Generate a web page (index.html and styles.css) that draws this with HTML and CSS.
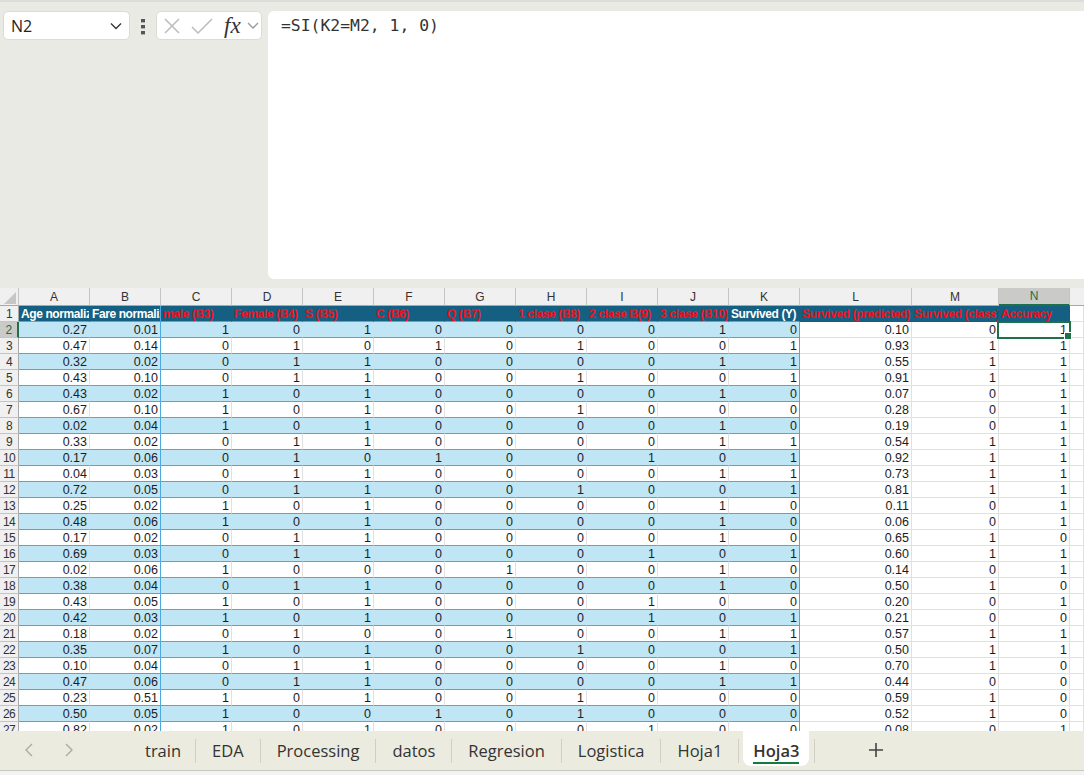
FILE: index.html
```html
<!DOCTYPE html>
<html lang="es">
<head>
<meta charset="UTF-8">
<meta name="viewport" content="width=device-width, initial-scale=1.0">
<title>Hoja3</title>
<link rel="stylesheet" href="styles.css">
</head>
<body>

<div class="formula-area">
  <div class="name-box">
    <span>N2</span>
    <svg class="chev" width="12" height="8" viewBox="0 0 12 8"><path d="M1 1.5 L6 6.5 L11 1.5"/></svg>
  </div>
  <svg class="dots" width="4" height="16" viewBox="0 0 4 16"><rect width="4" height="3.4" y="0"/><rect width="4" height="3.4" y="6"/><rect width="4" height="3.4" y="12"/></svg>
  <div class="fx-box">
    <svg class="fx-icon" width="16" height="16" viewBox="0 0 16 16"><path d="M1 1 L15 15 M15 1 L1 15"/></svg>
    <svg class="fx-icon" width="22" height="16" viewBox="0 0 22 16"><path d="M1 9 L7 15 L21 1"/></svg>
    <span class="fx">fx</span>
    <svg class="chev light" width="12" height="7" viewBox="0 0 12 7"><path d="M1 1 L6 6 L11 1"/></svg>
  </div>
  <div class="formula-input">=SI(K2=M2, 1, 0)</div>
</div>

<div class="sheet">
  <table>
    <thead>
      <tr class="letters">
        <th class="corner"><svg width="12" height="12" viewBox="0 0 12 12"><path d="M12 0 V12 H0 Z"/></svg></th>
        <th>A</th><th>B</th><th>C</th><th>D</th><th>E</th><th>F</th><th>G</th><th>H</th><th>I</th><th>J</th><th>K</th><th class="w-l">L</th><th class="w-m">M</th><th class="sel-col">N</th><th class="w-o"></th>
      </tr>
    </thead>
    <tbody>
      <tr class="titles"><th>1</th><td class="w">Age normalized</td><td class="w">Fare normalized</td><td>male (B3)</td><td>Female (B4)</td><td>S (B5)</td><td>C (B6)</td><td>Q (B7)</td><td>1 clase (B8)</td><td>2 clase B(9)</td><td>3 clase (B10)</td><td class="w">Survived (Y)</td><td>Survived (predicted)</td><td>Survived (class)</td><td>Accuracy</td><td></td></tr>
      <tr><th class="sel-row">2</th><td>0.27</td><td>0.01</td><td>1</td><td>0</td><td>1</td><td>0</td><td>0</td><td>0</td><td>0</td><td>1</td><td>0</td><td>0.10</td><td>0</td><td class="active-cell">1<span class="cursor"></span></td><td></td></tr>
      <tr><th>3</th><td>0.47</td><td>0.14</td><td>0</td><td>1</td><td>0</td><td>1</td><td>0</td><td>1</td><td>0</td><td>0</td><td>1</td><td>0.93</td><td>1</td><td>1</td><td></td></tr>
      <tr><th>4</th><td>0.32</td><td>0.02</td><td>0</td><td>1</td><td>1</td><td>0</td><td>0</td><td>0</td><td>0</td><td>1</td><td>1</td><td>0.55</td><td>1</td><td>1</td><td></td></tr>
      <tr><th>5</th><td>0.43</td><td>0.10</td><td>0</td><td>1</td><td>1</td><td>0</td><td>0</td><td>1</td><td>0</td><td>0</td><td>1</td><td>0.91</td><td>1</td><td>1</td><td></td></tr>
      <tr><th>6</th><td>0.43</td><td>0.02</td><td>1</td><td>0</td><td>1</td><td>0</td><td>0</td><td>0</td><td>0</td><td>1</td><td>0</td><td>0.07</td><td>0</td><td>1</td><td></td></tr>
      <tr><th>7</th><td>0.67</td><td>0.10</td><td>1</td><td>0</td><td>1</td><td>0</td><td>0</td><td>1</td><td>0</td><td>0</td><td>0</td><td>0.28</td><td>0</td><td>1</td><td></td></tr>
      <tr><th>8</th><td>0.02</td><td>0.04</td><td>1</td><td>0</td><td>1</td><td>0</td><td>0</td><td>0</td><td>0</td><td>1</td><td>0</td><td>0.19</td><td>0</td><td>1</td><td></td></tr>
      <tr><th>9</th><td>0.33</td><td>0.02</td><td>0</td><td>1</td><td>1</td><td>0</td><td>0</td><td>0</td><td>0</td><td>1</td><td>1</td><td>0.54</td><td>1</td><td>1</td><td></td></tr>
      <tr><th>10</th><td>0.17</td><td>0.06</td><td>0</td><td>1</td><td>0</td><td>1</td><td>0</td><td>0</td><td>1</td><td>0</td><td>1</td><td>0.92</td><td>1</td><td>1</td><td></td></tr>
      <tr><th>11</th><td>0.04</td><td>0.03</td><td>0</td><td>1</td><td>1</td><td>0</td><td>0</td><td>0</td><td>0</td><td>1</td><td>1</td><td>0.73</td><td>1</td><td>1</td><td></td></tr>
      <tr><th>12</th><td>0.72</td><td>0.05</td><td>0</td><td>1</td><td>1</td><td>0</td><td>0</td><td>1</td><td>0</td><td>0</td><td>1</td><td>0.81</td><td>1</td><td>1</td><td></td></tr>
      <tr><th>13</th><td>0.25</td><td>0.02</td><td>1</td><td>0</td><td>1</td><td>0</td><td>0</td><td>0</td><td>0</td><td>1</td><td>0</td><td>0.11</td><td>0</td><td>1</td><td></td></tr>
      <tr><th>14</th><td>0.48</td><td>0.06</td><td>1</td><td>0</td><td>1</td><td>0</td><td>0</td><td>0</td><td>0</td><td>1</td><td>0</td><td>0.06</td><td>0</td><td>1</td><td></td></tr>
      <tr><th>15</th><td>0.17</td><td>0.02</td><td>0</td><td>1</td><td>1</td><td>0</td><td>0</td><td>0</td><td>0</td><td>1</td><td>0</td><td>0.65</td><td>1</td><td>0</td><td></td></tr>
      <tr><th>16</th><td>0.69</td><td>0.03</td><td>0</td><td>1</td><td>1</td><td>0</td><td>0</td><td>0</td><td>1</td><td>0</td><td>1</td><td>0.60</td><td>1</td><td>1</td><td></td></tr>
      <tr><th>17</th><td>0.02</td><td>0.06</td><td>1</td><td>0</td><td>0</td><td>0</td><td>1</td><td>0</td><td>0</td><td>1</td><td>0</td><td>0.14</td><td>0</td><td>1</td><td></td></tr>
      <tr><th>18</th><td>0.38</td><td>0.04</td><td>0</td><td>1</td><td>1</td><td>0</td><td>0</td><td>0</td><td>0</td><td>1</td><td>0</td><td>0.50</td><td>1</td><td>0</td><td></td></tr>
      <tr><th>19</th><td>0.43</td><td>0.05</td><td>1</td><td>0</td><td>1</td><td>0</td><td>0</td><td>0</td><td>1</td><td>0</td><td>0</td><td>0.20</td><td>0</td><td>1</td><td></td></tr>
      <tr><th>20</th><td>0.42</td><td>0.03</td><td>1</td><td>0</td><td>1</td><td>0</td><td>0</td><td>0</td><td>1</td><td>0</td><td>1</td><td>0.21</td><td>0</td><td>0</td><td></td></tr>
      <tr><th>21</th><td>0.18</td><td>0.02</td><td>0</td><td>1</td><td>0</td><td>0</td><td>1</td><td>0</td><td>0</td><td>1</td><td>1</td><td>0.57</td><td>1</td><td>1</td><td></td></tr>
      <tr><th>22</th><td>0.35</td><td>0.07</td><td>1</td><td>0</td><td>1</td><td>0</td><td>0</td><td>1</td><td>0</td><td>0</td><td>1</td><td>0.50</td><td>1</td><td>1</td><td></td></tr>
      <tr><th>23</th><td>0.10</td><td>0.04</td><td>0</td><td>1</td><td>1</td><td>0</td><td>0</td><td>0</td><td>0</td><td>1</td><td>0</td><td>0.70</td><td>1</td><td>0</td><td></td></tr>
      <tr><th>24</th><td>0.47</td><td>0.06</td><td>0</td><td>1</td><td>1</td><td>0</td><td>0</td><td>0</td><td>0</td><td>1</td><td>1</td><td>0.44</td><td>0</td><td>0</td><td></td></tr>
      <tr><th>25</th><td>0.23</td><td>0.51</td><td>1</td><td>0</td><td>1</td><td>0</td><td>0</td><td>1</td><td>0</td><td>0</td><td>0</td><td>0.59</td><td>1</td><td>0</td><td></td></tr>
      <tr><th>26</th><td>0.50</td><td>0.05</td><td>1</td><td>0</td><td>0</td><td>1</td><td>0</td><td>1</td><td>0</td><td>0</td><td>0</td><td>0.52</td><td>1</td><td>0</td><td></td></tr>
      <tr><th>27</th><td>0.82</td><td>0.02</td><td>1</td><td>0</td><td>1</td><td>0</td><td>0</td><td>0</td><td>1</td><td>0</td><td>0</td><td>0.08</td><td>0</td><td>1</td><td></td></tr>
    </tbody>
  </table>
</div>

<div class="tabbar">
  <div class="nav">
    <svg width="10" height="16" viewBox="0 0 10 16"><path d="M8 2 L2 8 L8 14"/></svg>
    <svg width="10" height="16" viewBox="0 0 10 16"><path d="M2 2 L8 8 L2 14"/></svg>
  </div>
  <div class="tab">train</div>
  <div class="tab">EDA</div>
  <div class="tab">Processing</div>
  <div class="tab">datos</div>
  <div class="tab">Regresion</div>
  <div class="tab">Logistica</div>
  <div class="tab">Hoja1</div>
  <div class="tab active"><span>Hoja3</span></div>
  <div class="tab-end"></div>
  <svg class="plus" width="16" height="16" viewBox="0 0 16 16"><path d="M8 1 V15 M1 8 H15"/></svg>
</div>
<div class="statusbar"></div>

</body>
</html>
```

FILE: styles.css
```css
* {
  box-sizing: border-box;
}
body {
  margin: 0;
  width: 1084px;
  height: 775px;
  overflow: hidden;
  background: #e9eae3;
  font-family: "Liberation Sans", Arial, sans-serif;
  color: #222;
}

/* formula bar */
.formula-area {
  height: 288px;
  display: flex;
  align-items: flex-start;
  padding: 9px 0 0 3px;
  border-top: 2px solid #dcdcd8;
}
.name-box {
  width: 127px;
  height: 29px;
  display: flex;
  align-items: center;
  justify-content: space-between;
  padding: 0 7px 0 7px;
  background: #fff;
  border: 1px solid #dcdcd6;
  border-radius: 5px;
  font-family: "Open Sans", sans-serif;
  font-size: 16px;
}
.chev path {
  fill: none;
  stroke: #333;
  stroke-width: 1.3;
}
.chev.light path {
  stroke: #999;
}
.dots {
  margin: 8px 11px 0 11px;
  fill: #555;
}
.fx-box {
  width: 106px;
  height: 29px;
  display: flex;
  align-items: center;
  padding: 0 2px 0 7px;
  background: #fff;
  border: 1px solid #dcdcd6;
  border-radius: 5px;
}
.fx-icon {
  margin-right: 11px;
}
.fx-icon path {
  fill: none;
  stroke: #bcbcbc;
  stroke-width: 1.5;
}
.fx {
  margin-right: 6px;
  font-family: "Liberation Serif", serif;
  font-style: italic;
  font-size: 23px;
  line-height: 26px;
  color: #333;
}
.formula-input {
  width: 816px;
  height: 268px;
  margin-left: 6px;
  padding: 5px 13px;
  background: #fff;
  border-radius: 6px 0 0 6px;
  font-family: "DejaVu Sans Mono", monospace;
  font-size: 16.4px;
  line-height: 20px;
  color: #333;
}

/* grid */
.sheet {
  height: 443px;
  overflow: hidden;
  background: #fff;
}
table {
  width: 1084px;
  table-layout: fixed;
  border-collapse: separate;
  border-spacing: 0;
  font-size: 12.5px;
}
th, td {
  height: 16px;
  padding: 0;
  overflow: hidden;
  white-space: nowrap;
  font-weight: normal;
}
td {
  padding: 2px 2px 0;
  text-align: right;
  line-height: 13px;
  color: #1c1c1c;
  border-right: 1px solid #e1e1e1;
  border-bottom: 1px solid #e1e1e1;
}
.letters th {
  width: 71px;
  height: 18px;
  background: #f0f0f0;
  border-right: 1px solid #c4c4c4;
  border-bottom: 1px solid #a8a8a8;
  font-size: 12px;
  color: #333;
}
.letters .corner {
  width: 19px;
  padding: 2px 0 0 4px;
  text-align: left;
  line-height: 0;
}
.corner path {
  fill: #c6c6c6;
}
.letters .w-l {
  width: 112px;
}
.letters .w-m {
  width: 87px;
}
.letters .w-o {
  width: 14px;
  border-right: none;
}
.letters .sel-col {
  background: #cacbc9;
  color: #1f6b45;
  border-bottom: 2px solid #1f7048;
}
tbody th {
  padding-top: 2px;
  background: #f0f0f0;
  border-right: 1px solid #a8a8a8;
  border-bottom: 1px solid #c4c4c4;
  font-size: 12px;
  letter-spacing: -0.6px;
  line-height: 13px;
  color: #333;
}
tbody .sel-row {
  background: #cacbc9;
  color: #1f6b45;
  border-right: 2px solid #1f7048;
}

/* table style: banded rows on A to K */
tbody td:nth-child(-n+12) {
  border-bottom-color: #4aa9dd;
}
tbody tr:nth-child(even) td:nth-child(-n+12) {
  background: #c0e6f5;
  border-right-color: #c0e6f5;
}
tbody td:nth-child(3),
tbody tr:nth-child(even) td:nth-child(3),
tbody td:nth-child(12),
tbody tr:nth-child(even) td:nth-child(12) {
  border-right-color: #4aa9dd;
}

tbody .titles td {
  background: #156082;
  border-right-color: #156082;
  border-bottom-color: #4aa9dd;
  padding: 1px 0 0 2px;
  text-align: left;
  font-weight: bold;
  font-size: 12px;
  letter-spacing: -0.4px;
  color: #ea1420;
}
tbody .titles td.w {
  color: #fff;
}
tbody .titles td:nth-child(3) {
  border-right-color: #4aa9dd;
}
tbody .titles td:nth-child(n+13) {
  border-bottom-color: #156082;
}
tbody .titles td:last-child {
  background: #fff;
  border-right-color: #e1e1e1;
  border-bottom-color: #e1e1e1;
}

.active-cell {
  position: relative;
  overflow: visible;
}
.cursor {
  position: absolute;
  left: -2px;
  top: -1px;
  width: 74px;
  height: 18px;
  border: 2px solid #1f7048;
}
.cursor::after {
  content: "";
  position: absolute;
  right: -3px;
  bottom: -3px;
  width: 6px;
  height: 6px;
  background: #1f7048;
  border: 1px solid #fff;
}

/* sheet tabs */
.tabbar {
  height: 40px;
  display: flex;
  align-items: flex-start;
  background: #ebecdf;
  border-bottom: 1px solid #c8c8c0;
  font-family: "Open Sans", sans-serif;
  font-size: 16.5px;
  color: #333;
}
.nav {
  width: 129px;
  display: flex;
  gap: 30px;
  padding: 11px 0 0 24px;
}
.nav path {
  fill: none;
  stroke: #aaa;
  stroke-width: 1.4;
}
.tab {
  height: 24px;
  margin-top: 8px;
  padding: 0 16px;
  line-height: 24px;
  border-right: 1px solid #cfcfc8;
}
.nav + .tab {
  padding-right: 14px;
}
.tab.active {
  height: 35px;
  margin: 0 0 0 4px;
  padding: 8px 10px 0;
  background: #fff;
  border: none;
  border-radius: 0 0 8px 8px;
  font-weight: 600;
}
.tab.active span {
  display: block;
  height: 25px;
  border-bottom: 2px solid #107c41;
}
.tab-end {
  width: 1px;
  height: 24px;
  margin: 8px 0 0 5px;
  background: #cfcfc8;
}
.plus {
  margin: 11px 0 0 53px;
}
.plus path {
  fill: none;
  stroke: #444;
  stroke-width: 1.6;
}
.statusbar {
  height: 4px;
  background: #f3f3f3;
}
```
